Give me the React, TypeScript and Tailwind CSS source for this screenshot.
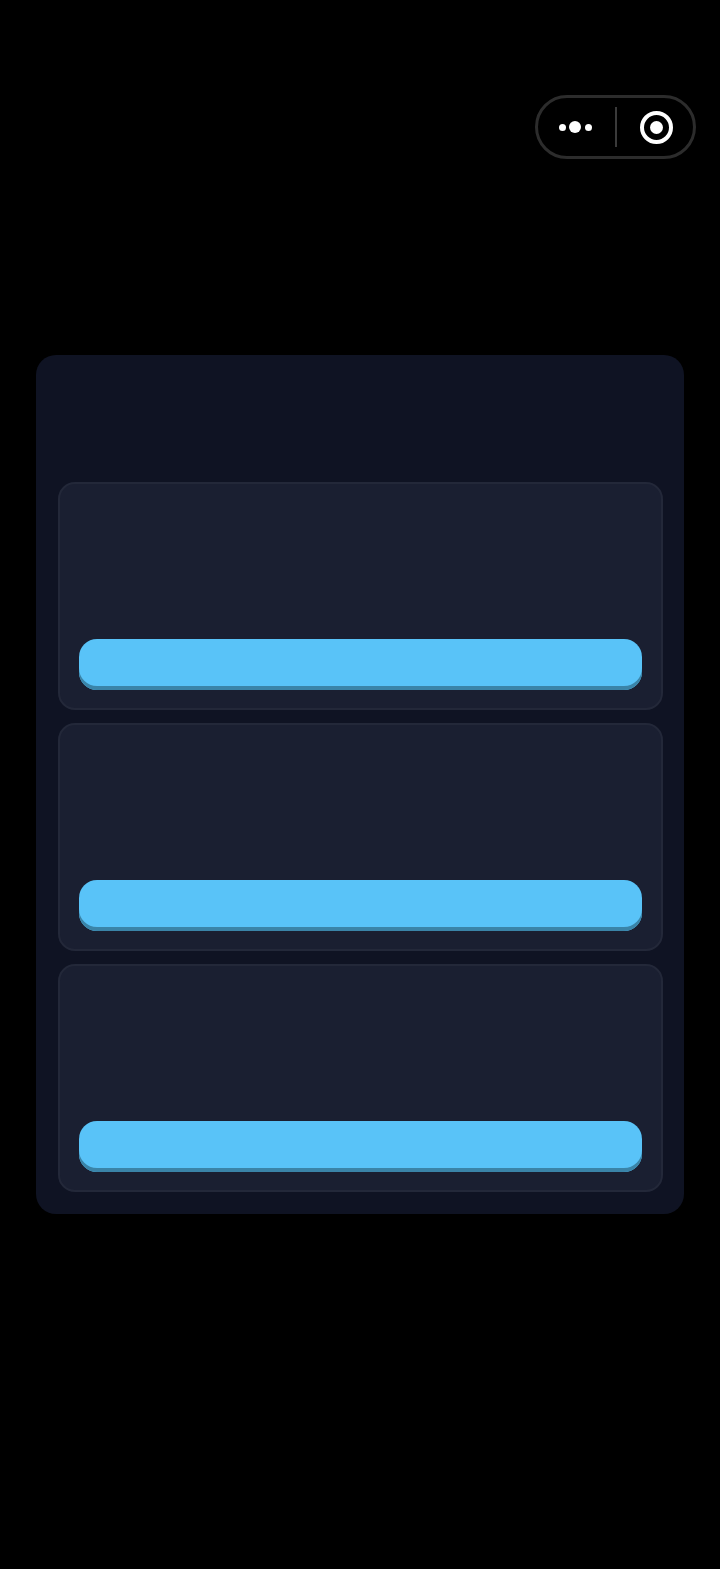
export default function App() {
  const cards = [0, 1, 2];
  return (
    <div className="min-h-[1569px] bg-black pt-[95px]">
      <div className="flex justify-end pr-[24px]">
        <div className="flex h-[64px] w-[161px] items-center rounded-full border-[3px] border-[#2c2c2c]">
          <div className="flex w-[77px] shrink-0 items-center justify-center gap-[3.5px] pr-[3px]">
            <span className="h-[7px] w-[7px] rounded-full bg-white" />
            <span className="h-[12px] w-[12px] rounded-full bg-white" />
            <span className="h-[7px] w-[7px] rounded-full bg-white" />
          </div>
          <div className="h-[40px] w-[2px] bg-[#3a3a3a]" />
          <div className="flex flex-1 items-center justify-center pl-[3px]">
            <div className="flex h-[33px] w-[33px] items-center justify-center rounded-full border-[4px] border-white">
              <span className="h-[13px] w-[13px] rounded-full bg-white" />
            </div>
          </div>
        </div>
      </div>
      <div className="ml-[36px] mt-[196px] flex h-[859px] w-[648px] flex-col gap-[12.6px] rounded-[20px] bg-[#0f1323] pl-[22px] pr-[21px] pt-[127px]">
        {cards.map((c) => (
          <div key={c} className="flex h-[228.4px] flex-col justify-end rounded-[17px] border-2 border-[#232839] bg-[#1a1f31] px-[19px] pb-[18px]">
            <div className="h-[51px] rounded-[18px] bg-[#59c3f8] shadow-[inset_0_-4px_0_#3a84a8]" />
          </div>
        ))}
      </div>
    </div>
  );
}
